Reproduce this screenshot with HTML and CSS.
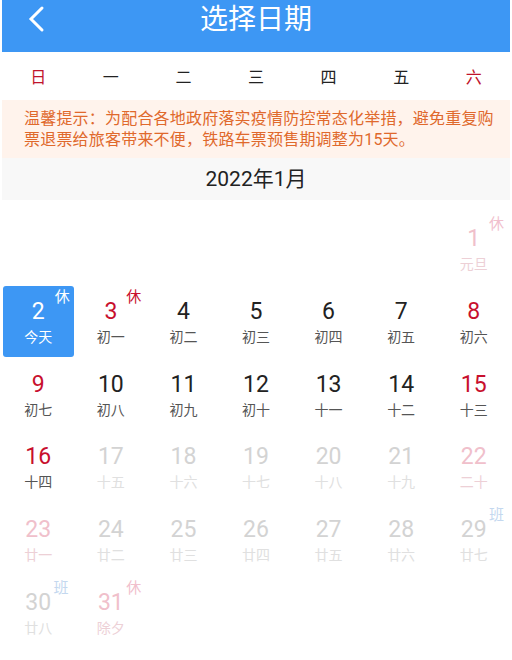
FILE: index.html
```html
<!DOCTYPE html>
<html lang="zh-CN">
<head>
<meta charset="utf-8">
<title>选择日期</title>
<link rel="stylesheet" href="styles.css">
</head>
<body>
<div class="page">
  <header class="topbar">
    <span class="back">
      <svg width="20" height="28" viewBox="0 0 20 28"><polyline points="15,3 4,14 15,25" fill="none" stroke="#fff" stroke-width="3" stroke-linecap="round" stroke-linejoin="miter"/></svg>
    </span>
    <h1 class="title">选择日期</h1>
  </header>
  <div class="weekdays">
    <span class="red">日</span><span>一</span><span>二</span><span>三</span><span>四</span><span>五</span><span class="red">六</span>
  </div>
  <div class="notice">温馨提示：为配合各地政府落实疫情防控常态化举措，避免重复购票退票给旅客带来不便，铁路车票预售期调整为15天。</div>
  <div class="month">2022年1月</div>
  <div class="grid">
    <div class="cell"></div><div class="cell"></div><div class="cell"></div><div class="cell"></div><div class="cell"></div><div class="cell"></div>
    <div class="cell fade-red"><span class="num">1</span><span class="lunar">元旦</span><span class="badge rest">休</span></div>

    <div class="cell today"><div class="sel"><span class="num">2</span><span class="lunar">今天</span><span class="badge">休</span></div></div>
    <div class="cell red"><span class="num">3</span><span class="lunar">初一</span><span class="badge rest">休</span></div>
    <div class="cell"><span class="num">4</span><span class="lunar">初二</span></div>
    <div class="cell"><span class="num">5</span><span class="lunar">初三</span></div>
    <div class="cell"><span class="num">6</span><span class="lunar">初四</span></div>
    <div class="cell"><span class="num">7</span><span class="lunar">初五</span></div>
    <div class="cell red"><span class="num">8</span><span class="lunar">初六</span></div>

    <div class="cell red"><span class="num">9</span><span class="lunar">初七</span></div>
    <div class="cell"><span class="num">10</span><span class="lunar">初八</span></div>
    <div class="cell"><span class="num">11</span><span class="lunar">初九</span></div>
    <div class="cell"><span class="num">12</span><span class="lunar">初十</span></div>
    <div class="cell"><span class="num">13</span><span class="lunar">十一</span></div>
    <div class="cell"><span class="num">14</span><span class="lunar">十二</span></div>
    <div class="cell red"><span class="num">15</span><span class="lunar">十三</span></div>

    <div class="cell red"><span class="num">16</span><span class="lunar">十四</span></div>
    <div class="cell fade"><span class="num">17</span><span class="lunar">十五</span></div>
    <div class="cell fade"><span class="num">18</span><span class="lunar">十六</span></div>
    <div class="cell fade"><span class="num">19</span><span class="lunar">十七</span></div>
    <div class="cell fade"><span class="num">20</span><span class="lunar">十八</span></div>
    <div class="cell fade"><span class="num">21</span><span class="lunar">十九</span></div>
    <div class="cell fade-red"><span class="num">22</span><span class="lunar">二十</span></div>

    <div class="cell fade-red"><span class="num">23</span><span class="lunar">廿一</span></div>
    <div class="cell fade"><span class="num">24</span><span class="lunar">廿二</span></div>
    <div class="cell fade"><span class="num">25</span><span class="lunar">廿三</span></div>
    <div class="cell fade"><span class="num">26</span><span class="lunar">廿四</span></div>
    <div class="cell fade"><span class="num">27</span><span class="lunar">廿五</span></div>
    <div class="cell fade"><span class="num">28</span><span class="lunar">廿六</span></div>
    <div class="cell fade"><span class="num">29</span><span class="lunar">廿七</span><span class="badge work">班</span></div>

    <div class="cell fade"><span class="num">30</span><span class="lunar">廿八</span><span class="badge work">班</span></div>
    <div class="cell fade-red"><span class="num">31</span><span class="lunar">除夕</span><span class="badge rest">休</span></div>
  </div>
</div>
</body>
</html>
```
FILE: styles.css
```css
* { box-sizing: border-box; }
html, body { margin: 0; padding: 0; background: #fff; }
body {
  font-family: Roboto, "Noto Sans CJK SC", "Noto Sans", sans-serif;
  color: #222;
}
.page {
  margin: 0 2px;
  width: 508px;
}
.topbar {
  position: relative;
  height: 52px;
  background: #3d97f4;
  display: flex;
  justify-content: center;
}
.back {
  position: absolute;
  left: 25px;
  top: 5px;
  width: 20px;
  height: 28px;
  display: block;
}
.back svg { display: block; }
.title {
  margin: 0;
  font-weight: 400;
  font-size: 28px;
  line-height: 40px;
  color: #fff;
}
.weekdays {
  height: 48px;
  display: grid;
  grid-template-columns: repeat(7, 1fr);
  align-items: center;
  text-align: center;
  font-size: 16px;
  color: #222;
}
.weekdays .red { color: #c0142c; }
.notice {
  background: #fff3ec;
  color: #e0692c;
  font-size: 16px;
  line-height: 21px;
  padding: 8px 12px 8px 22px;
  height: 58px;
  letter-spacing: 0.2px;
}
.month {
  background: #f8f8f8;
  height: 42px;
  line-height: 42px;
  text-align: center;
  font-size: 21px;
  color: #222;
}
.grid {
  margin-top: 13px;
  display: grid;
  grid-template-columns: repeat(7, 1fr);
  grid-auto-rows: 72.8px;
}
.cell {
  position: relative;
  display: flex;
  flex-direction: column;
  align-items: center;
  padding-top: 13px;
}
.num {
  font-size: 23px;
  line-height: 26px;
  color: #222;
}
.lunar {
  margin-top: 2px;
  font-size: 14px;
  line-height: 20px;
  color: #555;
}
.badge {
  position: absolute;
  right: 6px;
  top: 3px;
  font-size: 15px;
  line-height: 17px;
}
.badge.rest { color: #c8102e; }
.badge.work { color: #c4d8ef; }
.red .num { color: #c8102e; }
.fade .num { color: #d3d3d3; }
.fade .lunar { color: #e0e0e0; }
.fade-red .num { color: #f0c0cb; }
.fade-red .lunar { color: #edd0d6; }
.fade-red .badge.rest, .fade .badge.rest { color: #f1c0cd; }
.cell.today { padding: 0; }
.sel {
  position: relative;
  width: 71px;
  height: 71px;
  border-radius: 3px;
  background: #3d97f4;
  display: flex;
  flex-direction: column;
  align-items: center;
  padding-top: 13px;
}
.sel .num, .sel .lunar, .sel .badge { color: #fff; }
.sel .badge { right: 4px; }
```
